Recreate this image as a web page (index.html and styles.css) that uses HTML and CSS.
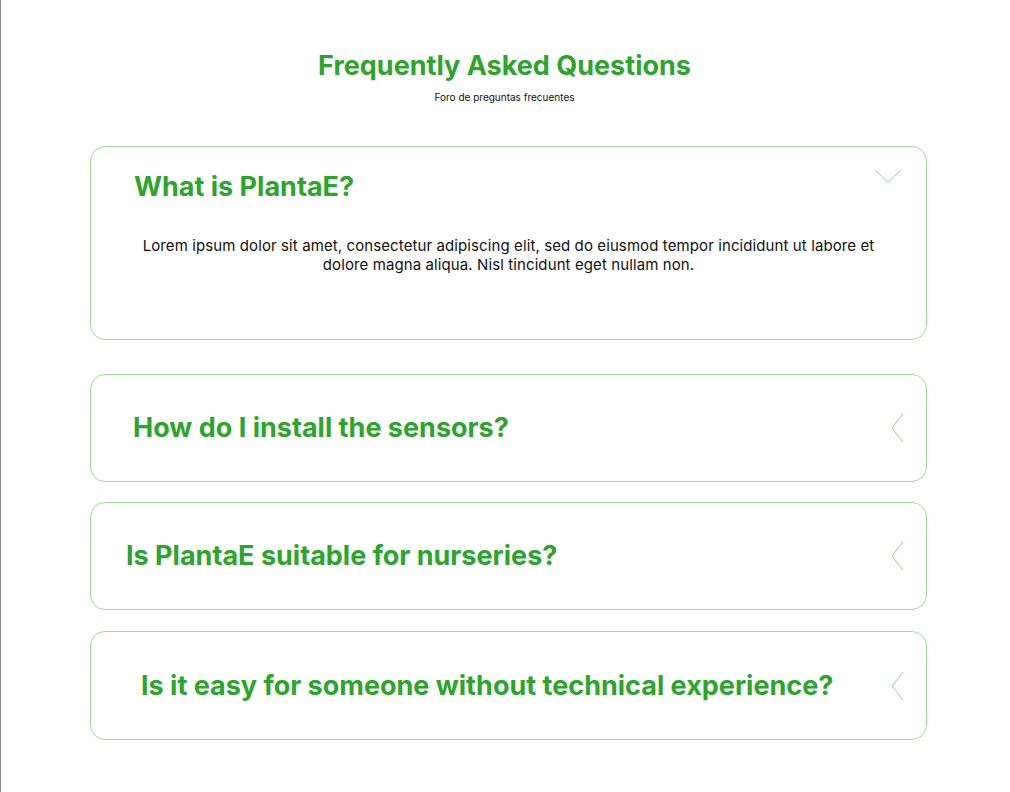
FILE: index.html
```html
<!DOCTYPE html>
<html lang="en">
<head>
<meta charset="utf-8">
<title>FAQ</title>
<link rel="stylesheet" href="styles.css">
</head>
<body>
<div class="page">
  <header class="head">
    <h1 class="title">Frequently Asked Questions</h1>
    <p class="subtitle">Foro de preguntas frecuentes</p>
  </header>
  <section class="faq">
    <div class="card card-open">
      <div class="card-head">
        <h2 class="q q-1">What is PlantaE?</h2>
        <svg class="chev-down" width="30" height="14" viewBox="0 0 30 14"><polyline points="1.5,1 15,13 28.5,1" fill="none" stroke="#8fd98a" stroke-width="1"/></svg>
      </div>
      <p class="answer">Lorem ipsum dolor sit amet, consectetur adipiscing elit, sed do eiusmod tempor incididunt ut labore et dolore magna aliqua. Nisl tincidunt eget nullam non.</p>
    </div>
    <div class="card card-closed card-2">
      <h2 class="q q-2">How do I install the sensors?</h2>
      <svg class="chev-left" width="13" height="30" viewBox="0 0 13 30"><polyline points="12,1 1,15 12,29" fill="none" stroke="#8fd98a" stroke-width="1"/></svg>
    </div>
    <div class="card card-closed card-3">
      <h2 class="q q-3">Is PlantaE suitable for nurseries?</h2>
      <svg class="chev-left" width="13" height="30" viewBox="0 0 13 30"><polyline points="12,1 1,15 12,29" fill="none" stroke="#8fd98a" stroke-width="1"/></svg>
    </div>
    <div class="card card-closed card-4">
      <h2 class="q q-4">Is it easy for someone without technical experience?</h2>
      <svg class="chev-left" width="13" height="30" viewBox="0 0 13 30"><polyline points="12,1 1,15 12,29" fill="none" stroke="#8fd98a" stroke-width="1"/></svg>
    </div>
  </section>
</div>
</body>
</html>
```
FILE: styles.css
```css
html, body {
  margin: 0;
  padding: 0;
  background: #ffffff;
}
body {
  font-family: Inter, "Noto Sans", sans-serif;
  color: #111111;
}
.page {
  min-height: 792px;
  border-left: 1px solid #8a8a8a;
  box-sizing: border-box;
  padding-top: 50px;
}
.head {
  text-align: center;
  padding-right: 2px;
}
.title {
  margin: 0;
  font-size: 27px;
  line-height: 32px;
  font-weight: 700;
  color: #2ba52b;
}
.subtitle {
  margin: 9px 0 0;
  font-size: 10px;
  line-height: 12px;
  color: #111;
}
.faq {
  margin: 43px 0 0 89px;
  width: 837px;
  display: flex;
  flex-direction: column;
}
.card {
  box-sizing: border-box;
  border: 1px solid #9edd98;
  border-radius: 15px;
  background: #fff;
}
.q {
  margin: 0;
  font-size: 27px;
  line-height: 32px;
  font-weight: 700;
  color: #2ba52b;
}
.card-open {
  height: 194px;
  padding: 24px 23px 0 43px;
}
.card-head {
  display: flex;
  justify-content: space-between;
  align-items: flex-start;
}
.chev-down {
  margin-top: -2px;
}
.answer {
  margin: 33px -23px 0 -43px;
  padding: 0 40px;
  text-align: center;
  font-size: 15px;
  line-height: 19px;
  letter-spacing: 0.1px;
  color: #111;
}
.card-closed {
  height: 108px;
  display: flex;
  align-items: center;
  justify-content: space-between;
  padding-right: 22px;
}
.chev-left {
  flex: none;
}
.card-2 {
  margin-top: 34px;
  padding-left: 42px;
}
.card-3 {
  margin-top: 20px;
  padding-left: 35px;
}
.card-4 {
  margin-top: 21px;
  height: 109px;
  padding-left: 50px;
}
```
